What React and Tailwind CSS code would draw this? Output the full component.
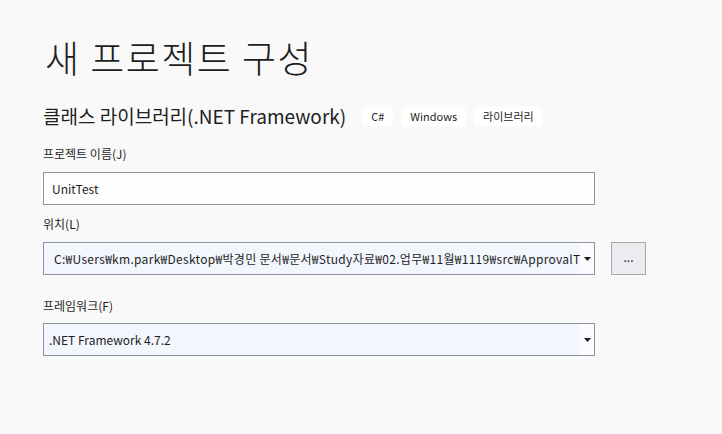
const font = { fontFamily: '"Noto Sans CJK KR", "Noto Sans", sans-serif' }

const tags = ["C#", "Windows", "라이브러리"]

const Arrow = () => (
  <svg width="7" height="4" viewBox="0 0 7 4" className="text-[#1e1e1e]">
    <path d="M0 0h7L3.5 4z" fill="currentColor" />
  </svg>
)

const Label = ({ children, className = "" }) => (
  <p className={`h-4 text-[12px] leading-4 text-[#1e1e1e] ${className}`}>{children}</p>
)

const Combo = ({ value, className = "", pad = "pl-[10px]", tight = "" }) => (
  <div
    className={`flex h-[33px] w-[552px] items-stretch border border-[#8c94a4] bg-[#f3f6fd] ${className}`}
  >
    <div
      className={`flex min-w-0 flex-1 items-center overflow-hidden whitespace-nowrap text-[12px] text-[#1e1e1e] ${pad} ${tight}`}
    >
      {value}
    </div>
    <div className="flex w-[14px] items-center justify-center bg-[#fbfbfd]">
      <Arrow />
    </div>
  </div>
)

export default function App() {
  return (
    <div className="h-[434px] w-[722px] overflow-hidden bg-[#f9f9f9] pl-[43px] pt-[37px]" style={font}>
      <h1 className="h-10 pl-[2px] text-[37px] font-light leading-10 tracking-[1.5px] text-[#1e1e1e]">
        새 프로젝트 구성
      </h1>

      <div className="mt-[25px] flex h-7 items-center">
        <h2 className="text-[19px] leading-7 text-[#1e1e1e]">클래스 라이브러리(.NET Framework)</h2>
        <div className="ml-4 flex gap-2">
          {tags.map((tag) => (
            <span
              key={tag}
              className="flex h-[19px] items-center rounded-[4px] bg-white px-[9px] text-[11px] text-[#1e1e1e]"
            >
              {tag}
            </span>
          ))}
        </div>
      </div>

      <Label className="mt-4">프로젝트 이름(J)</Label>
      <div className="mt-[10px] flex h-[33px] w-[552px] items-center border border-[#8c94a4] bg-[#fdfdfd] pl-2 text-[12px] text-[#1e1e1e]">
        UnitTest
      </div>

      <Label className="mt-[11px]">위치(L)</Label>
      <div className="mt-[10px] flex items-center gap-4">
        <Combo
          tight="tracking-[0.3px]"
          value="C:₩Users₩km.park₩Desktop₩박경민 문서₩문서₩Study자료₩02.업무₩11월₩1119₩src₩ApprovalTest"
        />
        <button className="flex h-[33px] w-[35px] items-center justify-center border border-[#a8a8a8] bg-[#ececf0] pb-1 text-[12px] text-[#1e1e1e]">
          ...
        </button>
      </div>

      <Label className="mt-[23px]">프레임워크(F)</Label>
      <Combo className="mt-[9px]" pad="pl-[5px]" value=".NET Framework 4.7.2" />
    </div>
  )
}
